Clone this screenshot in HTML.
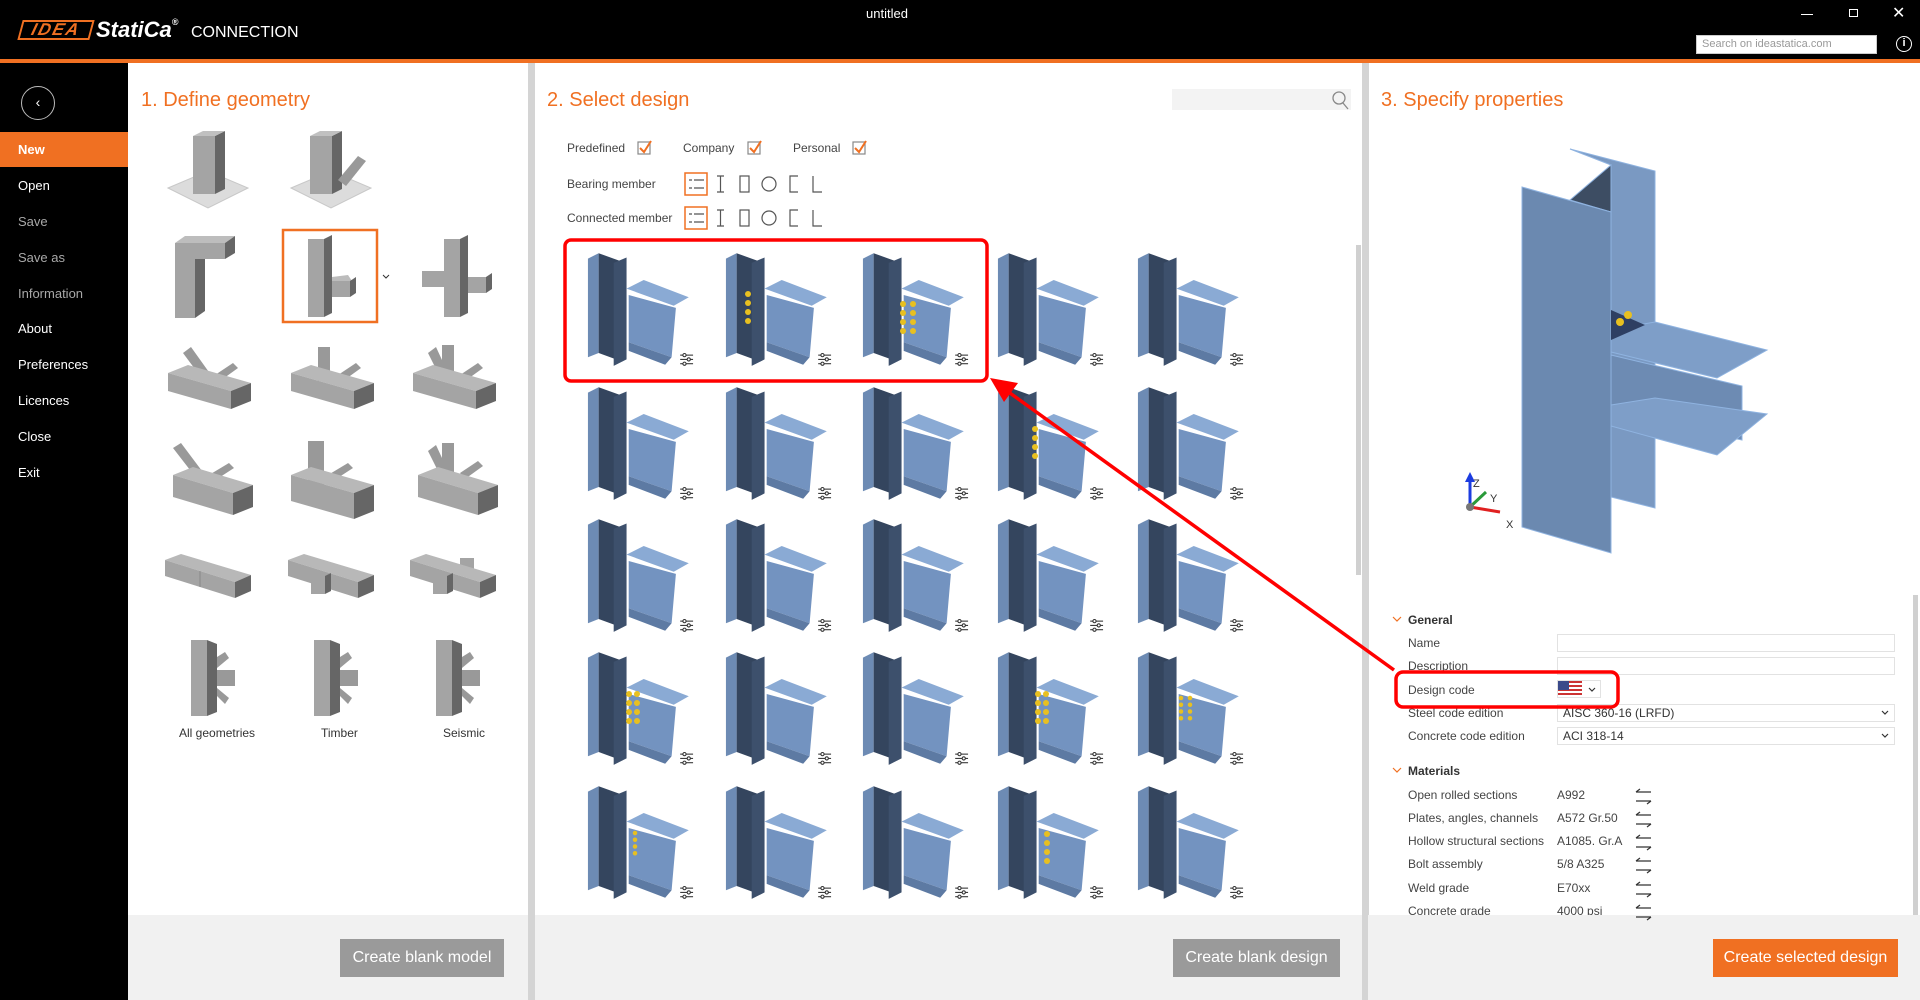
<!DOCTYPE html>
<html><head><meta charset="utf-8">
<style>
*{margin:0;padding:0;box-sizing:border-box}
body{width:1920px;height:1000px;overflow:hidden;background:#fff;font-family:"Liberation Sans",sans-serif;position:relative}
.a{position:absolute;white-space:nowrap}
.sb{font-size:13px;color:#fff}
.sbg{color:#a8a8a8}
.ttl{font-size:20px;color:#f07022}
.f{font-size:12px;color:#444}
.p{font-size:12px;color:#444}
.btn{position:absolute;height:38px;background:#9a9a9a;color:#fff;font-size:16px;text-align:center;line-height:38px}
.inp{position:absolute;height:18px;border:1px solid #e2e2e2;background:#fff;font-size:12px;color:#333;padding-left:5px;line-height:16px}
</style></head><body>
<div class="a" style="left:0;top:0;width:1920px;height:59px;background:#000"></div>
<div class="a" style="left:0;top:59px;width:1920px;height:4px;background:#f07022"></div>
<div class="a" style="left:0;top:63px;width:128px;height:937px;background:#000"></div>
<div class="a" style="left:128px;top:915px;width:1792px;height:85px;background:#f1f1f1"></div>
<div class="a" style="left:528px;top:63px;width:7px;height:937px;background:#d4d4d4"></div>
<div class="a" style="left:1362px;top:63px;width:7px;height:937px;background:#d4d4d4"></div>
<div class="a" style="left:1356px;top:245px;width:5px;height:330px;background:#d0d0d0"></div>
<div class="a" style="left:1913px;top:595px;width:5px;height:320px;background:#d0d0d0"></div>

<div class="a" style="left:20px;top:20px;width:72px;height:20px;border:2px solid #f07022;transform:skewX(-15deg);color:#f07022;font:italic bold 17px 'Liberation Sans',sans-serif;line-height:16px;letter-spacing:2px;text-align:center">IDEA</div>
<div class="a" style="left:96px;top:17px;color:#fff;font:italic bold 22px 'Liberation Sans',sans-serif">StatiCa<span style="font-size:9px;vertical-align:top">®</span></div>
<div class="a" style="left:191px;top:24px;color:#fff;font-size:16px">CONNECTION</div>
<div class="a" style="left:866px;top:6px;color:#fff;font-size:13px">untitled</div>
<div class="a" style="left:1801px;top:14px;width:12px;height:1px;background:#fff"></div>
<div class="a" style="left:1849px;top:9px;width:9px;height:8px;border:1px solid #fff"></div>
<div class="a" style="left:1892px;top:3px;color:#fff;font-size:16px">✕</div>
<div class="a" style="left:1696px;top:35px;width:181px;height:19px;background:#fff;border:1px solid #ccc;font-size:11px;color:#999;padding:2px 5px">Search on ideastatica.com</div>
<div class="a" style="left:1896px;top:36px;width:16px;height:16px;border:1.5px solid #fff;border-radius:50%;color:#fff;font-size:11px;text-align:center;line-height:13px;font-weight:bold">i</div>

<div class="a" style="left:21px;top:86px;width:34px;height:34px;border:1.5px solid #bbb;border-radius:50%;color:#fff;font-size:14px;text-align:center;line-height:30px">‹</div>
<div class="a" style="left:0;top:132px;width:128px;height:35px;background:#f07022"></div>
<div class="a sb" style="left:18px;top:142px;font-weight:bold">New</div>
<div class="a sb" style="left:18px;top:178px">Open</div>
<div class="a sb sbg" style="left:18px;top:214px">Save</div>
<div class="a sb sbg" style="left:18px;top:250px">Save as</div>
<div class="a sb sbg" style="left:18px;top:286px">Information</div>
<div class="a sb" style="left:18px;top:321px">About</div>
<div class="a sb" style="left:18px;top:357px">Preferences</div>
<div class="a sb" style="left:18px;top:393px">Licences</div>
<div class="a sb" style="left:18px;top:429px">Close</div>
<div class="a sb" style="left:18px;top:465px">Exit</div>

<div class="a ttl" style="left:141px;top:89px">1. Define geometry</div>
<div class="a ttl" style="left:547px;top:89px">2. Select design</div>
<div class="a ttl" style="left:1381px;top:89px">3. Specify properties</div>

<div class="a" style="left:1172px;top:89px;width:179px;height:21px;background:#f3f3f3"></div>
<div class="a f" style="left:567px;top:141px">Predefined</div>
<div class="a f" style="left:683px;top:141px">Company</div>
<div class="a f" style="left:793px;top:141px">Personal</div>
<div class="a f" style="left:567px;top:177px">Bearing member</div>
<div class="a f" style="left:567px;top:211px">Connected member</div>

<div class="a" style="left:179px;top:726px;font-size:12px;color:#333">All geometries</div>
<div class="a" style="left:321px;top:726px;font-size:12px;color:#333">Timber</div>
<div class="a" style="left:443px;top:726px;font-size:12px;color:#333">Seismic</div>

<div class="a p" style="left:1408px;top:613px;font-weight:bold;color:#333">General</div>
<div class="a p" style="left:1408px;top:636px">Name</div>
<div class="a p" style="left:1408px;top:659px">Description</div>
<div class="a p" style="left:1408px;top:706px">Steel code edition</div>
<div class="a p" style="left:1408px;top:729px">Concrete code edition</div>
<div class="inp" style="left:1557px;top:634px;width:338px"></div>
<div class="inp" style="left:1557px;top:657px;width:338px"></div>
<div class="inp" style="left:1557px;top:704px;width:338px">AISC 360-16 (LRFD)</div>
<div class="inp" style="left:1557px;top:727px;width:338px">ACI 318-14</div>
<div class="inp" style="left:1557px;top:680px;width:44px"></div>
<div class="a p" style="left:1408px;top:764px;font-weight:bold;color:#333">Materials</div>
<div class="a p" style="left:1408px;top:788px">Open rolled sections</div>
<div class="a p" style="left:1408px;top:811px">Plates, angles, channels</div>
<div class="a p" style="left:1408px;top:834px">Hollow structural sections</div>
<div class="a p" style="left:1408px;top:857px">Bolt assembly</div>
<div class="a p" style="left:1408px;top:881px">Weld grade</div>
<div class="a p" style="left:1408px;top:904px">Concrete grade</div>
<div class="a p" style="left:1557px;top:788px">A992</div>
<div class="a p" style="left:1557px;top:811px">A572 Gr.50</div>
<div class="a p" style="left:1557px;top:834px">A1085. Gr.A</div>
<div class="a p" style="left:1557px;top:857px">5/8 A325</div>
<div class="a p" style="left:1557px;top:881px">E70xx</div>
<div class="a p" style="left:1557px;top:904px">4000 psi</div>
<div class="a" style="left:1368px;top:915px;width:545px;height:85px;background:#f1f1f1"></div>

<div class="btn" style="left:340px;top:939px;width:164px">Create blank model</div>
<div class="btn" style="left:1173px;top:939px;width:167px">Create blank design</div>
<div class="btn" style="left:1713px;top:939px;width:185px;background:#f07022">Create selected design</div>

<svg class="a" style="left:0;top:0" width="1920" height="1000" viewBox="0 0 1920 1000">
<defs>
<symbol id="dt" viewBox="0 0 110 110">
 <polygon points="6,8 16,3 16,96 6,100" fill="#6d8bb4"/>
 <polygon points="16,3 38,11 38,104 16,96" fill="#34455e"/>
 <polygon points="30,12 42,7 42,102 30,108" fill="#3d506c"/>
 <polygon points="42,36 58,28 100,44 86,52" fill="#8aaad4"/>
 <polygon points="44,42 88,54 84,100 44,86" fill="#7393c0"/>
 <polygon points="44,86 84,100 78,107 44,94" fill="#5d7aa3"/>
 <g stroke="#333" stroke-width="1" fill="#fff"><line x1="92" y1="98" x2="104" y2="98"/><line x1="92" y1="102" x2="104" y2="102"/><line x1="92" y1="106" x2="104" y2="106"/><circle cx="96" cy="98" r="1.5"/><circle cx="100" cy="102" r="1.5"/><circle cx="96" cy="106" r="1.5"/></g>
</symbol>
<symbol id="bolts" viewBox="0 0 10 40"><g fill="#e8c020"><circle cx="5" cy="4" r="3"/><circle cx="5" cy="13" r="3"/><circle cx="5" cy="22" r="3"/><circle cx="5" cy="31" r="3"/></g></symbol>
</defs>
<g>
 <g transform="translate(163,126)"><polygon points="5,62 45,45 85,62 45,82" fill="#dcdcdc" stroke="#c8c8c8"/><rect x="30" y="10" width="22" height="58" fill="#a4a4a4"/><polygon points="52,10 62,5 62,63 52,68" fill="#666"/><polygon points="30,10 40,5 62,5 52,10" fill="#c0c0c0"/></g>
 <g transform="translate(286,126)"><polygon points="5,62 45,45 85,62 45,82" fill="#dcdcdc" stroke="#c8c8c8"/><rect x="24" y="10" width="22" height="58" fill="#a4a4a4"/><polygon points="46,10 56,5 56,63 46,68" fill="#666"/><polygon points="24,10 34,5 56,5 46,10" fill="#c0c0c0"/><polygon points="52,54 72,30 80,35 60,60" fill="#999"/></g>
 <g transform="translate(163,231)"><rect x="12" y="12" width="20" height="75" fill="#a4a4a4"/><polygon points="32,28 42,24 42,80 32,87" fill="#666"/><polygon points="12,12 22,5 72,5 62,12" fill="#bdbdbd"/><rect x="22" y="12" width="40" height="16" fill="#a4a4a4"/><polygon points="62,12 72,5 72,22 62,28" fill="#666"/></g>
 <rect x="283" y="230" width="94" height="92" fill="none" stroke="#f07022" stroke-width="2.5"/>
 <g transform="translate(286,231)"><rect x="22" y="8" width="16" height="78" fill="#a4a4a4"/><polygon points="38,8 46,4 46,82 38,86" fill="#666"/><polygon points="46,46 62,44 66,50 46,54" fill="#bcbcbc"/><rect x="46" y="50" width="18" height="16" fill="#a4a4a4"/><polygon points="64,50 70,46 70,62 64,66" fill="#666"/><path d="M97 44l3 3 3-3" stroke="#333" fill="none" stroke-width="1"/></g>
 <g transform="translate(408,231)"><rect x="36" y="8" width="16" height="78" fill="#a4a4a4"/><polygon points="52,8 60,4 60,82 52,86" fill="#666"/><rect x="14" y="40" width="22" height="16" fill="#a4a4a4"/><rect x="60" y="46" width="18" height="16" fill="#a4a4a4"/><polygon points="78,46 84,42 84,58 78,62" fill="#666"/></g>
 <g fill="#a4a4a4">
 <g transform="translate(163,335)"><polygon points="20,18 28,12 48,40 40,45" fill="#999"/><polygon points="52,40 70,28 75,33 57,46" fill="#999"/><polygon points="5,38 25,30 88,48 68,56" fill="#b8b8b8"/><polygon points="5,38 68,56 68,74 5,56"/><polygon points="68,56 88,48 88,66 68,74" fill="#666"/></g>
 <g transform="translate(286,335)"><rect x="32" y="12" width="12" height="34" fill="#999"/><polygon points="52,40 70,28 75,33 57,46" fill="#999"/><polygon points="5,38 25,30 88,48 68,56" fill="#b8b8b8"/><polygon points="5,38 68,56 68,74 5,56"/><polygon points="68,56 88,48 88,66 68,74" fill="#666"/></g>
 <g transform="translate(408,335)"><polygon points="20,18 28,12 40,38 32,42" fill="#999"/><rect x="34" y="10" width="12" height="34" fill="#999"/><polygon points="52,40 70,28 75,33 57,46" fill="#999"/><polygon points="5,38 25,30 88,48 68,56" fill="#b8b8b8"/><polygon points="5,38 68,56 68,74 5,56"/><polygon points="68,56 88,48 88,66 68,74" fill="#666"/></g>
 <g transform="translate(163,433)"><polygon points="10,15 18,10 42,42 34,46" fill="#999"/><polygon points="46,42 66,30 71,35 51,48" fill="#999"/><polygon points="10,42 30,34 90,52 70,60" fill="#b8b8b8"/><polygon points="10,42 70,60 70,82 10,64"/><polygon points="70,60 90,52 90,74 70,82" fill="#666"/></g>
 <g transform="translate(286,433)"><rect x="22" y="8" width="16" height="44" fill="#999"/><polygon points="42,42 62,30 67,35 47,48" fill="#999"/><polygon points="5,42 25,34 88,52 68,60" fill="#b8b8b8"/><polygon points="5,42 68,60 68,86 5,68"/><polygon points="68,60 88,52 88,78 68,86" fill="#666"/></g>
 <g transform="translate(408,433)"><polygon points="20,18 28,12 40,38 32,42" fill="#999"/><rect x="34" y="10" width="12" height="34" fill="#999"/><polygon points="52,40 70,28 75,33 57,46" fill="#999"/><polygon points="10,42 30,34 90,52 70,60" fill="#b8b8b8"/><polygon points="10,42 70,60 70,82 10,64"/><polygon points="70,60 90,52 90,74 70,82" fill="#666"/></g>
 <g transform="translate(163,540)"><polygon points="2,20 18,14 88,35 72,42" fill="#b8b8b8"/><polygon points="2,20 72,42 72,58 2,36"/><polygon points="72,42 88,35 88,51 72,58" fill="#666"/><line x1="37" y1="31" x2="37" y2="47" stroke="#888"/></g>
 <g transform="translate(286,540)"><polygon points="2,20 18,14 88,35 72,42" fill="#b8b8b8"/><polygon points="2,20 72,42 72,58 2,36"/><polygon points="72,42 88,35 88,51 72,58" fill="#666"/><rect x="25" y="36" width="14" height="18"/><polygon points="39,36 45,33 45,51 39,54" fill="#666"/></g>
 <g transform="translate(408,540)"><rect x="52" y="18" width="14" height="14"/><polygon points="2,20 18,14 88,35 72,42" fill="#b8b8b8"/><polygon points="2,20 72,42 72,58 2,36"/><polygon points="72,42 88,35 88,51 72,58" fill="#666"/><rect x="25" y="36" width="14" height="18"/><polygon points="39,36 45,33 45,51 39,54" fill="#666"/></g>
 <g transform="translate(163,632)"><rect x="28" y="8" width="16" height="76"/><polygon points="44,8 54,12 54,80 44,84" fill="#666"/><polygon points="54,25 62,20 66,26 54,36" fill="#999"/><rect x="54" y="38" width="18" height="16" fill="#999"/><polygon points="54,56 66,66 62,72 54,64" fill="#999"/></g>
 <g transform="translate(286,632)"><rect x="28" y="8" width="16" height="76"/><polygon points="44,8 54,12 54,80 44,84" fill="#666"/><polygon points="54,25 62,20 66,26 54,36" fill="#999"/><rect x="54" y="38" width="18" height="16" fill="#999"/><polygon points="54,56 66,66 62,72 54,64" fill="#999"/></g>
 <g transform="translate(408,632)"><rect x="28" y="8" width="16" height="76"/><polygon points="44,8 54,12 54,80 44,84" fill="#666"/><polygon points="54,25 62,20 66,26 54,36" fill="#999"/><rect x="54" y="38" width="18" height="16" fill="#999"/><polygon points="54,56 66,66 62,72 54,64" fill="#999"/></g>
 </g>
</g>
<g fill="none" stroke="#888" stroke-width="1.2">
 <rect x="638" y="142" width="12" height="12"/><rect x="748" y="142" width="12" height="12"/><rect x="853" y="142" width="12" height="12"/>
</g>
<g fill="none" stroke="#f07022" stroke-width="2"><path d="M640 148l4 4 7-11"/><path d="M750 148l4 4 7-11"/><path d="M855 148l4 4 7-11"/></g>
<g fill="none" stroke="#f07022" stroke-width="1.5"><rect x="685" y="173" width="22" height="22"/><rect x="685" y="207" width="22" height="22"/></g>
<g fill="none" stroke="#555" stroke-width="1.2">
 <path d="M689 180h3M694 180h10M689 188h3M694 188h10M689 214h3M694 214h10M689 222h3M694 222h10"/>
 <g id="sh"><path d="M717 176h7M720.5 176v16M717 192h7"/><rect x="740" y="176" width="9" height="16"/><circle cx="769" cy="184" r="7"/><path d="M798 176h-8v16h8"/><path d="M813 176v16h9"/></g>
 <use href="#sh" y="34"/>
</g>
<g>
 <g id="r1">
 <use href="#dt" x="578" y="250" width="125" height="118"/>
 <use href="#dt" x="716" y="250" width="125" height="118"/>
 <use href="#dt" x="853" y="250" width="125" height="118"/>
 <use href="#dt" x="988" y="250" width="125" height="118"/>
 <use href="#dt" x="1128" y="250" width="125" height="118"/>
 </g>
 <use href="#r1" y="134"/>
 <use href="#r1" y="266"/>
 <use href="#r1" y="399"/>
 <use href="#r1" y="533"/>
 <use href="#bolts" x="743" y="290" width="10" height="40"/>
 <use href="#bolts" x="898" y="300" width="10" height="40"/>
 <use href="#bolts" x="908" y="300" width="10" height="40"/>
 <use href="#bolts" x="1030" y="425" width="10" height="40"/>
 <use href="#bolts" x="624" y="690" width="10" height="40"/>
 <use href="#bolts" x="632" y="690" width="10" height="40"/>
 <use href="#bolts" x="1033" y="690" width="10" height="40"/>
 <use href="#bolts" x="1041" y="690" width="10" height="40"/>
 <use href="#bolts" x="1176" y="695" width="10" height="30"/>
 <use href="#bolts" x="1185" y="695" width="10" height="30"/>
 <use href="#bolts" x="630" y="830" width="10" height="30"/>
 <use href="#bolts" x="1042" y="830" width="10" height="40"/>
</g>
<g stroke="#8fb3e0" stroke-width="1">
 <polygon points="1570,149 1655,171 1655,508 1611,497 1611,165" fill="#7a99c2"/>
 <polygon points="1570,200 1611,165 1611,212" fill="#3d4d63"/>
 <polygon points="1522,187 1611,212 1611,553 1522,527" fill="#6b89b0"/>
 <polygon points="1611,355 1742,386 1742,440 1611,412" fill="#6d8bb3"/>
 <polygon points="1611,330 1655,322 1767,350 1717,378 1611,352" fill="#7e9ec8"/>
 <polygon points="1611,405 1655,398 1767,414 1717,455 1611,426" fill="#7e9ec8"/>
 <polygon points="1611,310 1645,325 1611,340" fill="#2e3f63" stroke="none"/>
 <circle cx="1620" cy="322" r="4" fill="#e8c020" stroke="none"/><circle cx="1628" cy="315" r="4" fill="#e8c020" stroke="none"/>
</g>
<g stroke-width="3">
 <line x1="1470" y1="507" x2="1470" y2="478" stroke="#1c3ce0"/><polygon points="1465,482 1470,472 1475,482" fill="#1c3ce0"/>
 <line x1="1470" y1="507" x2="1486" y2="492" stroke="#2a9a3a"/>
 <line x1="1470" y1="507" x2="1500" y2="512" stroke="#e02020"/>
 <circle cx="1470" cy="507" r="4" fill="#777" stroke="none"/>
</g>
<g font-family="Liberation Sans" font-size="11" fill="#333"><text x="1473" y="487">Z</text><text x="1490" y="502">Y</text><text x="1506" y="528">X</text></g>
<g fill="none" stroke="#f07022" stroke-width="1.2"><path d="M1393 617l4 4 4-4"/><path d="M1393 768l4 4 4-4"/></g>
<g fill="none" stroke="#333" stroke-width="1.2"><path d="M1589 688l3 3 3-3"/><path d="M1882 711l3 3 3-3"/><path d="M1882 734l3 3 3-3"/></g>
<g><rect x="1558" y="681" width="24" height="16" fill="#fff"/><g fill="#c33"><rect x="1558" y="681" width="24" height="2"/><rect x="1558" y="685" width="24" height="2"/><rect x="1558" y="689" width="24" height="2"/><rect x="1558" y="693" width="24" height="2"/></g><rect x="1558" y="681" width="11" height="9" fill="#3a4a8a"/></g>
<g id="sw" fill="none" stroke="#333" stroke-width="1.2"><path d="M1636 792h15M1636 792l4-3M1636 801h15M1651 801l-4 3"/></g>
<use href="#sw" y="23"/><use href="#sw" y="46"/><use href="#sw" y="69"/><use href="#sw" y="93"/><use href="#sw" y="116"/>
<g fill="none" stroke="#888" stroke-width="1.3"><circle cx="1339" cy="98" r="6"/><path d="M1343 103l5 6"/></g>
<rect x="565" y="240" width="422" height="141" rx="6" fill="none" stroke="#f00" stroke-width="3.5"/>
<rect x="1396" y="672" width="222" height="35" rx="7" fill="none" stroke="#f00" stroke-width="3.5"/>
<line x1="1394" y1="670" x2="1003" y2="388" stroke="#f00" stroke-width="3.5"/>
<polygon points="990,378 1018,383 1004,402" fill="#f00"/>
</svg>
<div class="a" style="left:1408px;top:683px;font-size:12px;color:#444">Design code</div>
</body></html>
